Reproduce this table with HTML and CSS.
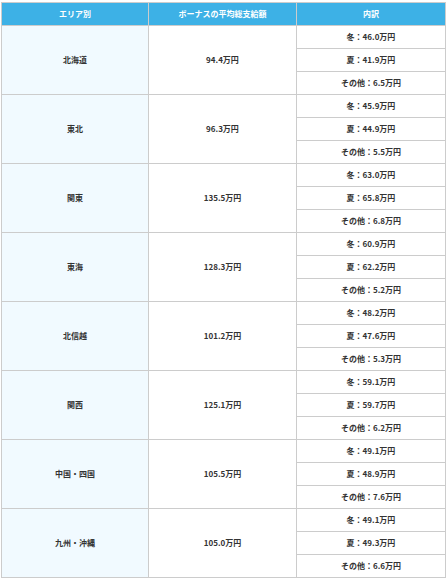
FILE: index.html
```html
<!DOCTYPE html>
<html lang="ja">
<head>
<meta charset="utf-8">
<link rel="stylesheet" href="styles.css">
</head>
<body>
<table class="bonus">
  <colgroup><col class="c1"><col class="c2"><col class="c3"></colgroup>
  <thead>
    <tr><th>エリア別</th><th>ボーナスの平均総支給額</th><th>内訳</th></tr>
  </thead>
  <tbody>
    <tr><td class="area" rowspan="3">北海道</td><td class="total" rowspan="3">94.4万円</td><td>冬：46.0万円</td></tr>
    <tr><td>夏：41.9万円</td></tr>
    <tr><td>その他：6.5万円</td></tr>
    <tr><td class="area" rowspan="3">東北</td><td class="total" rowspan="3">96.3万円</td><td>冬：45.9万円</td></tr>
    <tr><td>夏：44.9万円</td></tr>
    <tr><td>その他：5.5万円</td></tr>
    <tr><td class="area" rowspan="3">関東</td><td class="total" rowspan="3">135.5万円</td><td>冬：63.0万円</td></tr>
    <tr><td>夏：65.8万円</td></tr>
    <tr><td>その他：6.8万円</td></tr>
    <tr><td class="area" rowspan="3">東海</td><td class="total" rowspan="3">128.3万円</td><td>冬：60.9万円</td></tr>
    <tr><td>夏：62.2万円</td></tr>
    <tr><td>その他：5.2万円</td></tr>
    <tr><td class="area" rowspan="3">北信越</td><td class="total" rowspan="3">101.2万円</td><td>冬：48.2万円</td></tr>
    <tr><td>夏：47.6万円</td></tr>
    <tr><td>その他：5.3万円</td></tr>
    <tr><td class="area" rowspan="3">関西</td><td class="total" rowspan="3">125.1万円</td><td>冬：59.1万円</td></tr>
    <tr><td>夏：59.7万円</td></tr>
    <tr><td>その他：6.2万円</td></tr>
    <tr><td class="area" rowspan="3">中国・四国</td><td class="total" rowspan="3">105.5万円</td><td>冬：49.1万円</td></tr>
    <tr><td>夏：48.9万円</td></tr>
    <tr><td>その他：7.6万円</td></tr>
    <tr><td class="area" rowspan="3">九州・沖縄</td><td class="total" rowspan="3">105.0万円</td><td>冬：49.1万円</td></tr>
    <tr><td>夏：49.3万円</td></tr>
    <tr><td>その他：6.6万円</td></tr>
  </tbody>
</table>
</body>
</html>
```

FILE: styles.css
```css
html, body {
  margin: 0;
  padding: 0;
  background: #fff;
}
body {
  padding: 2px 0 0 1px;
  font-family: "Noto Sans CJK JP", "Noto Sans", sans-serif;
}
.bonus {
  border-collapse: collapse;
  table-layout: fixed;
  width: 444px;
  font-size: 8px;
  font-weight: bold;
  color: #333;
}
.bonus .c1 { width: 147px; }
.bonus .c2 { width: 148px; }
.bonus .c3 { width: 149px; }
.bonus th,
.bonus td {
  border: 1px solid #cccccc;
  padding: 0;
  height: 22px;
  line-height: 12px;
  text-align: center;
  vertical-align: middle;
}
.bonus th {
  background: #3db1e6;
  color: #fff;
}
.bonus .area {
  background: #f1faff;
}
```
